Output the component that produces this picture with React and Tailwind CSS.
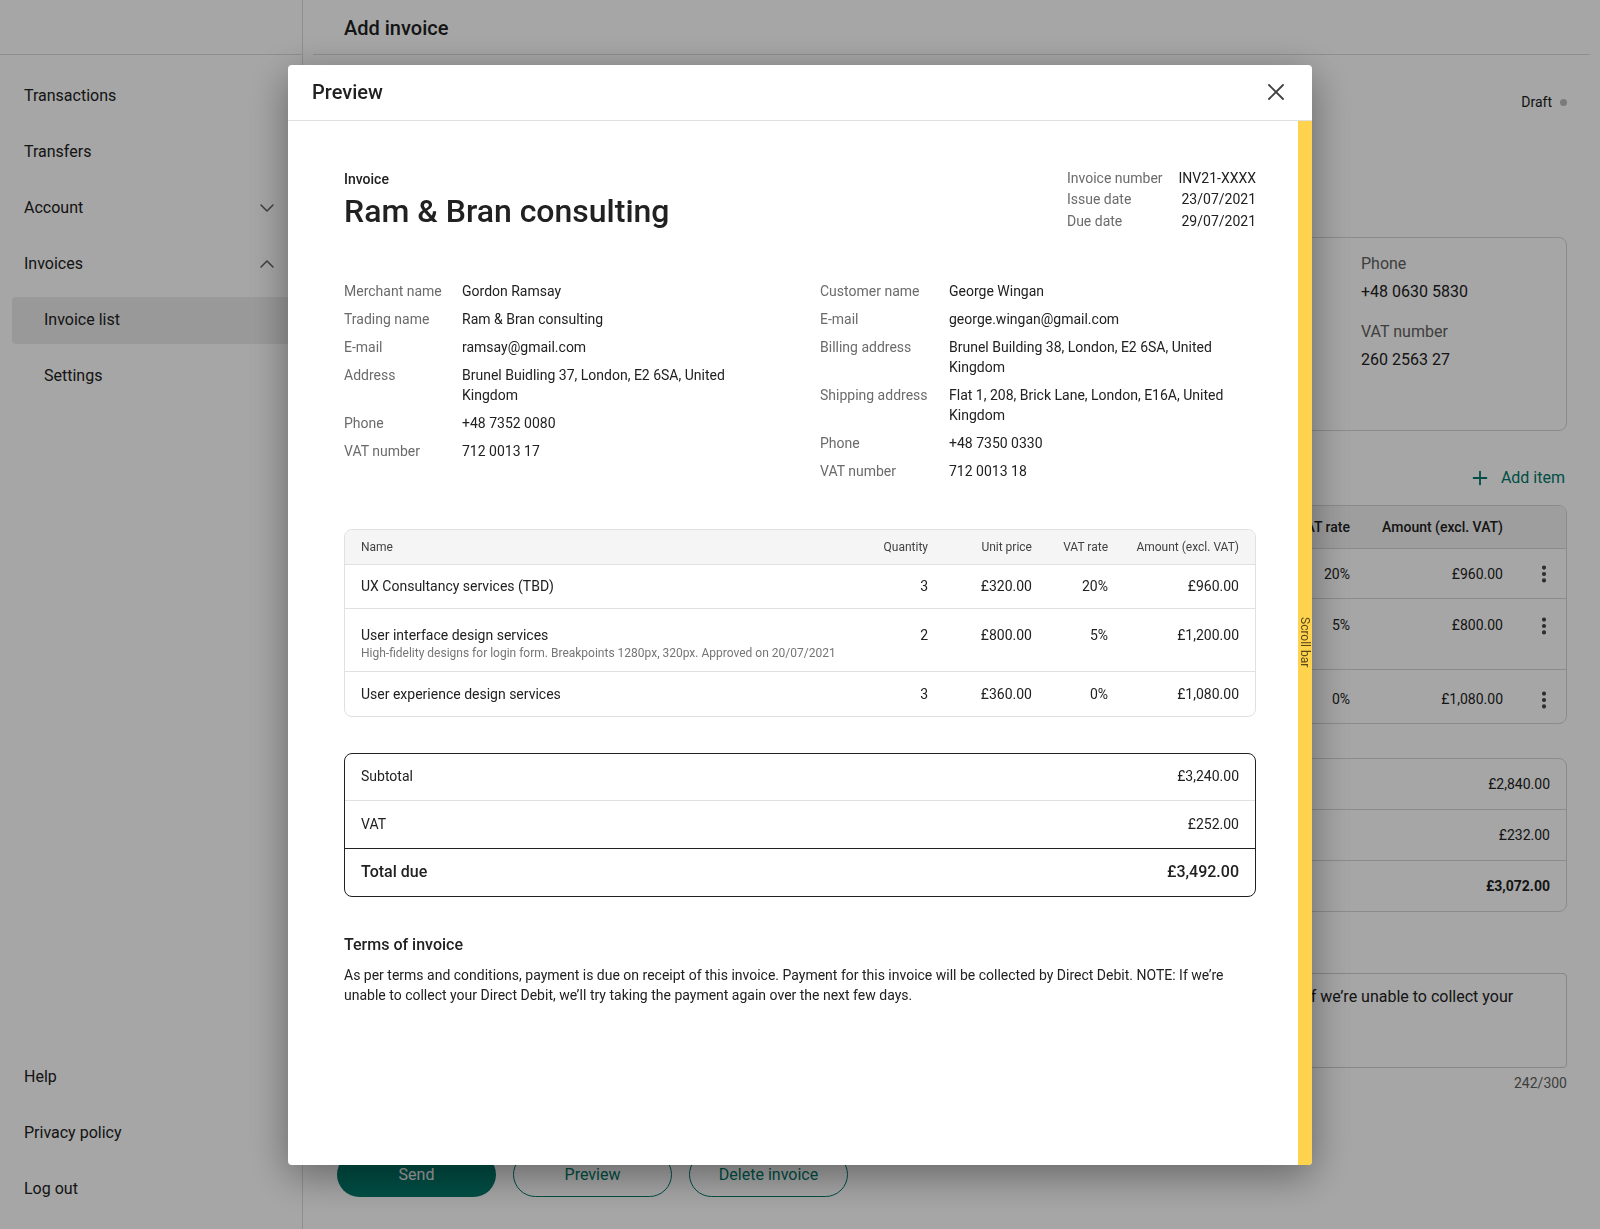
import { X, ChevronDown, ChevronUp, Plus, EllipsisVertical } from 'lucide-react'

const merchant = [
  ['Merchant name', 'Gordon Ramsay'],
  ['Trading name', 'Ram & Bran consulting'],
  ['E-mail', 'ramsay@gmail.com'],
  ['Address', 'Brunel Buidling 37, London, E2 6SA, United Kingdom'],
  ['Phone', '+48 7352 0080'],
  ['VAT number', '712 0013 17'],
]

const customer = [
  ['Customer name', 'George Wingan'],
  ['E-mail', 'george.wingan@gmail.com'],
  ['Billing address', 'Brunel Building 38, London, E2 6SA, United Kingdom'],
  ['Shipping address', 'Flat 1, 208, Brick Lane, London, E16A, United Kingdom'],
  ['Phone', '+48 7350 0330'],
  ['VAT number', '712 0013 18'],
]

const items = [
  { name: 'UX Consultancy services (TBD)', qty: 3, price: '£320.00', vat: '20%', amount: '£960.00' },
  {
    name: 'User interface design services',
    desc: 'High-fidelity designs for login form. Breakpoints 1280px, 320px. Approved on 20/07/2021',
    qty: 2,
    price: '£800.00',
    vat: '5%',
    amount: '£1,200.00',
  },
  { name: 'User experience design services', qty: 3, price: '£360.00', vat: '0%', amount: '£1,080.00' },
]

// rows of the item table behind the overlay
const bgItems = [
  { vat: '20%', amount: '£960.00', cls: 'h-[50px] items-center' },
  { vat: '5%', amount: '£800.00', cls: 'h-[71px] items-start pt-[16px]' },
  { vat: '0%', amount: '£1,080.00', cls: 'h-[53px] items-start pt-[19px]' },
]

const terms =
  'As per terms and conditions, payment is due on receipt of this invoice. Payment for this invoice will be collected by Direct Debit. NOTE: If we’re unable to collect your Direct Debit, we’ll try taking the payment again over the next few days.'

function NavItem({ label, chevron }) {
  return (
    <div className="h-14 flex items-center justify-between pl-6 pr-[23px] text-[16px] text-[#212121]">
      <span>{label}</span>
      {chevron === 'down' && <ChevronDown size={24} strokeWidth={1.5} className="text-[#616161]" />}
      {chevron === 'up' && <ChevronUp size={24} strokeWidth={1.5} className="text-[#616161]" />}
    </div>
  )
}

function Sidebar() {
  return (
    <aside className="w-[303px] shrink-0 h-full border-r border-[#dcdcdc] flex flex-col bg-white">
      <div className="h-[55px] shrink-0 border-b border-[#dcdcdc]" />
      <nav className="mt-[13px]">
        <NavItem label="Transactions" />
        <NavItem label="Transfers" />
        <NavItem label="Account" chevron="down" />
        <NavItem label="Invoices" chevron="up" />
        <div className="mx-3 my-[4.5px] h-[47px] rounded bg-[#ececec] flex items-center pl-8 text-[16px] text-[#212121]">
          Invoice list
        </div>
        <div className="h-14 flex items-center pl-[44px] text-[16px] text-[#212121]">Settings</div>
      </nav>
      <div className="mt-auto pb-[12px]">
        <NavItem label="Help" />
        <NavItem label="Privacy policy" />
        <NavItem label="Log out" />
      </div>
    </aside>
  )
}

function Background() {
  return (
    <div className="flex-1 min-w-0 h-full bg-white">
      <div className="h-[55px] mx-[10px] border-b border-[#dcdcdc] flex items-center pl-[31px] pt-[2px]">
        <h1 className="text-[20px] font-medium text-[#212121]">Add invoice</h1>
      </div>
      <div className="pl-[41px] pr-[33px]">
        <div className="mt-[35px] h-6 flex items-center justify-end gap-[8px] text-[14px] text-[#212121]">
          Draft
          <span className="w-[7px] h-[7px] rounded-full bg-[#bdbdbd]" />
        </div>

        <div className="mt-[123px] grid grid-cols-2 gap-6">
          <div className="h-[194px] rounded-lg border border-[#d6d6d6]" />
          <div className="h-[194px] rounded-lg border border-[#d6d6d6] px-6 pt-[14px] grid grid-cols-[1fr_181px]">
            <div />
            <div className="text-[16px] leading-6">
              <div className="text-[#616161]">Phone</div>
              <div className="mt-1 text-[#212121]">+48 0630 5830</div>
              <div className="mt-4 text-[#616161]">VAT number</div>
              <div className="mt-1 text-[#212121]">260 2563 27</div>
            </div>
          </div>
        </div>

        <div className="mt-[35px] h-6 flex items-center justify-end gap-[10px] pr-[2px] text-[16px] text-[#00796b]">
          <Plus size={22} strokeWidth={2} />
          Add item
        </div>

        <div className="mt-[15px] rounded-lg border border-[#d6d6d6] overflow-hidden">
          <div className="h-[43px] bg-[#f3f3f3] border-b border-[#d6d6d6] grid grid-cols-[1fr_100px_172px_44px] items-center text-[14px] font-medium text-[#212121]">
            <span className="pl-4">Name</span>
            <span className="text-right">VAT rate</span>
            <span className="text-right pr-[19px]">Amount (excl. VAT)</span>
            <span />
          </div>
          {bgItems.map((it, i) => (
            <div
              key={i}
              className={`${it.cls} ${i < 2 ? 'border-b border-[#d6d6d6]' : ''} grid grid-cols-[1fr_100px_172px_44px] text-[14px] leading-5 text-[#212121]`}
            >
              <span />
              <span className="text-right">{it.vat}</span>
              <span className="text-right pr-[19px]">{it.amount}</span>
              <span className="flex justify-center">
                <EllipsisVertical size={22} strokeWidth={2.5} className="text-[#424242]" />
              </span>
            </div>
          ))}
        </div>

        <div className="mt-[34px] ml-auto w-[600px] rounded-lg border border-[#d6d6d6] text-[14px] text-[#212121]">
          <div className="h-[51px] border-b border-[#d6d6d6] flex items-center justify-end pr-4">£2,840.00</div>
          <div className="h-[51px] border-b border-[#d6d6d6] flex items-center justify-end pr-4">£232.00</div>
          <div className="h-[50px] flex items-center justify-end pr-4 font-bold">£3,072.00</div>
        </div>

        <div className="mt-[61px] h-[95px] rounded border border-[#cfcfcf] pl-[7px] pr-4 pt-[11px] text-[16px] leading-6 text-[#212121]">
          {terms}
        </div>
        <div className="mt-[5px] text-right text-[14px] leading-5 text-[#616161]">242/300</div>

        <div className="mt-[59px] -ml-[7px] flex gap-[17px]">
          <button className="w-[159px] h-[45px] rounded-full bg-[#00796b] text-white text-[16px]">Send</button>
          <button className="w-[159px] h-[45px] rounded-full border border-[#00796b] text-[#00796b] text-[16px]">
            Preview
          </button>
          <button className="w-[159px] h-[45px] rounded-full border border-[#00796b] text-[#00796b] text-[16px]">
            Delete invoice
          </button>
        </div>
      </div>
    </div>
  )
}

function DetailList({ rows, labelWidth }) {
  return (
    <div className={`grid ${labelWidth} gap-y-2 text-[14px] leading-5`}>
      {rows.map(([k, v]) => (
        <div key={k} className="contents">
          <span className="text-[#6b6b6b]">{k}</span>
          <span className="text-[#212121]">{v}</span>
        </div>
      ))}
    </div>
  )
}

function PreviewModal() {
  return (
    <div className="fixed inset-0 bg-black/35 flex items-center justify-center">
      <div className="w-[1024px] h-[1100px] bg-white rounded-[4px] overflow-hidden flex flex-col shadow-[0_10px_40px_rgba(0,0,0,0.4)]">
        <div className="h-[56px] shrink-0 border-b border-[#e0e0e0] flex items-center justify-between pl-6 pr-[22px]">
          <h2 className="text-[20px] font-medium text-[#212121]">Preview</h2>
          <X size={28} strokeWidth={1.6} className="text-[#424242]" />
        </div>

        <div className="flex flex-1 min-h-0">
          <div className="flex-1 min-w-0 pl-[56px] pr-[42px] pt-[47px] text-[#212121]">
            <div className="flex items-start justify-between">
              <div>
                <div className="text-[14px] font-medium leading-[22px]">Invoice</div>
                <div className="text-[32px] font-medium leading-[42px]">Ram &amp; Bran consulting</div>
              </div>
              <div className="grid grid-cols-[auto_auto] gap-x-4 text-[14px] leading-[21.75px]">
                <span className="text-[#6b6b6b]">Invoice number</span>
                <span className="text-right">INV21-XXXX</span>
                <span className="text-[#6b6b6b]">Issue date</span>
                <span className="text-right">23/07/2021</span>
                <span className="text-[#6b6b6b]">Due date</span>
                <span className="text-right">29/07/2021</span>
              </div>
            </div>

            <div className="mt-12 grid grid-cols-2 gap-x-10 items-start">
              <DetailList rows={merchant} labelWidth="grid-cols-[118px_1fr]" />
              <DetailList rows={customer} labelWidth="grid-cols-[129px_1fr]" />
            </div>

            <div className="mt-12 rounded-lg border border-[#e0e0e0] overflow-hidden">
              <div className="h-[35px] bg-[#f5f5f5] border-b border-[#e0e0e0] grid grid-cols-[1fr_auto_104px_76px_131px] items-center px-4 text-[12px] text-[#424242]">
                <span>Name</span>
                <span className="text-right">Quantity</span>
                <span className="text-right">Unit price</span>
                <span className="text-right">VAT rate</span>
                <span className="text-right">Amount (excl. VAT)</span>
              </div>
              {items.map((it, i) => (
                <div
                  key={it.name}
                  className={`grid grid-cols-[1fr_auto_104px_76px_131px] px-4 text-[14px] leading-5 ${
                    it.desc ? 'items-start pt-[16px] pb-[10px]' : 'items-center h-[44px]'
                  } ${i < items.length - 1 ? 'border-b border-[#e0e0e0]' : ''}`}
                >
                  <div>
                    <div>{it.name}</div>
                    {it.desc && <div className="text-[12px] leading-4 text-[#757575]">{it.desc}</div>}
                  </div>
                  <span className="text-right w-[44px]">{it.qty}</span>
                  <span className="text-right">{it.price}</span>
                  <span className="text-right">{it.vat}</span>
                  <span className="text-right">{it.amount}</span>
                </div>
              ))}
            </div>

            <div className="mt-[36px] rounded-lg border border-[#212121] text-[14px]">
              <div className="h-[47px] border-b border-[#e0e0e0] flex items-center justify-between px-4">
                <span>Subtotal</span>
                <span>£3,240.00</span>
              </div>
              <div className="h-[48px] border-b border-[#212121] flex items-center justify-between px-4">
                <span>VAT</span>
                <span>£252.00</span>
              </div>
              <div className="h-[47px] flex items-center justify-between px-4 text-[16px] font-medium">
                <span>Total due</span>
                <span>£3,492.00</span>
              </div>
            </div>

            <h3 className="mt-9 text-[16px] font-medium leading-6">Terms of invoice</h3>
            <p className="mt-2 text-[14px] leading-5">{terms}</p>
          </div>

          <div className="w-[14px] shrink-0 bg-[#ffd34e] flex items-center justify-center">
            <span className="[writing-mode:vertical-rl] text-[12px] text-[#5a4a1a]">Scroll bar</span>
          </div>
        </div>
      </div>
    </div>
  )
}

export default function App() {
  return (
    <div className="relative h-[1229px] w-full overflow-hidden flex bg-white font-['Roboto',sans-serif]">
      <Sidebar />
      <Background />
      <PreviewModal />
    </div>
  )
}
